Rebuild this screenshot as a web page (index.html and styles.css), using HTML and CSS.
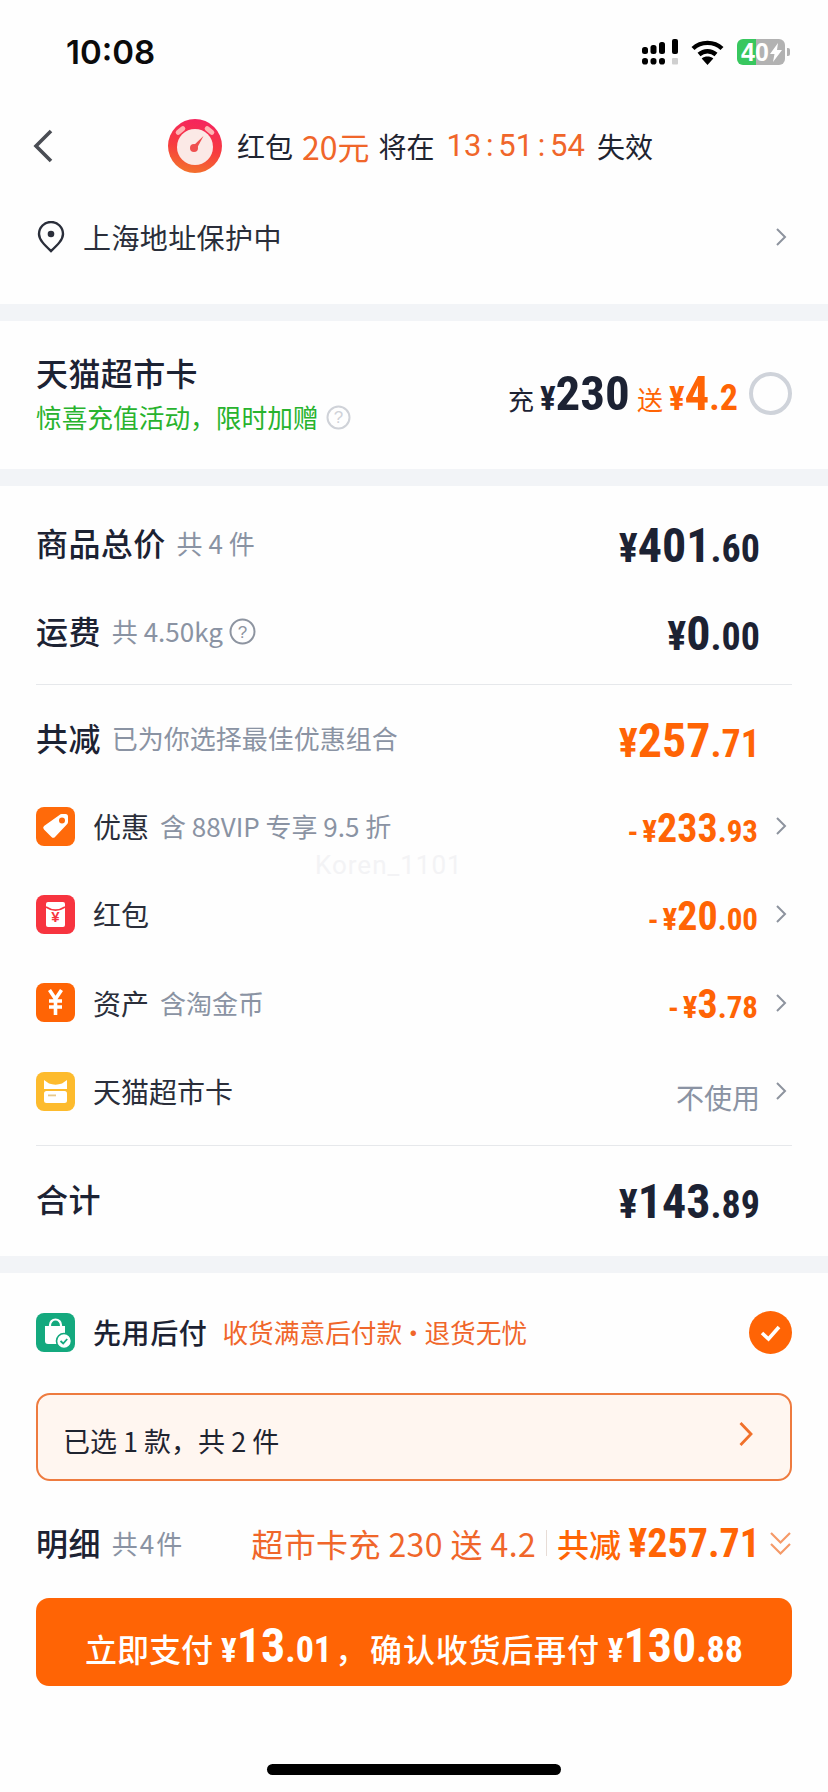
FILE: index.html
```html
<!DOCTYPE html>
<html lang="zh-CN">
<head>
<meta charset="utf-8">
<title>确认订单</title>
<link rel="stylesheet" href="styles.css">
</head>
<body>
<div class="page">
  <div class="status">
    <span class="time">10:08</span>
    <div class="status-icons">
      <svg class="signal" width="36" height="26" viewBox="0 0 36 26">
        <g fill="#000">
          <rect x="0" y="8" width="6" height="7" rx="2.500"/><rect x="8.500" y="6" width="6" height="9" rx="2.500"/><rect x="17" y="3" width="6" height="12" rx="2.500"/><rect x="30" y="0" width="6" height="15" rx="2"/>
          <rect x="0" y="19" width="6" height="6.500" rx="2.800"/><rect x="8.500" y="19" width="6" height="6.500" rx="2.800"/><rect x="17" y="19" width="6" height="6.500" rx="2.800"/>
        </g>
        <rect x="30" y="19" width="6" height="6.500" rx="1" fill="#cfcfcf"/>
      </svg>
      <svg class="wifi" width="33" height="25" viewBox="0 0 33 25">
        <path d="M2 8.500C10 1 23 1 31 8.500" fill="none" stroke="#000" stroke-width="4.400"/>
        <path d="M8 14.500c5-4.400 12-4.400 17 0" fill="none" stroke="#000" stroke-width="4.400"/>
        <path d="M16.500 25l-5.800-6.500c3.400-2.600 8.200-2.600 11.600 0z" fill="#000"/>
      </svg>
      <div class="battery"><div class="battery-body"><span class="battery-text">40</span><svg class="bolt" width="12" height="19" viewBox="0 0 12 19"><path d="M8 0L0 11h4.500L3 19l9-12H7z" fill="#fff"/></svg></div><i class="battery-tip"></i></div>
    </div>
  </div>

  <div class="nav">
    <svg class="back" width="20" height="34" viewBox="0 0 20 34"><path d="M18 2L3 17l15 15" fill="none" stroke="#4a4d54" stroke-width="3.600"/></svg>
    <div class="nav-title">
      <svg class="alarm" width="54" height="54" viewBox="0 0 54 54">
        <defs>
          <linearGradient id="alarmGrad" x1="0.6" y1="0" x2="0.4" y2="1"><stop offset="0" stop-color="#f5245f"/><stop offset="0.55" stop-color="#f73d3f"/><stop offset="1" stop-color="#f3722c"/></linearGradient>
        </defs>
        <circle cx="27" cy="27" r="27" fill="url(#alarmGrad)"/>
        <rect x="7" y="9" width="11" height="5" rx="2.500" fill="#ffb3b3" transform="rotate(-40 12.500 11.500)"/>
        <rect x="36" y="9" width="11" height="5" rx="2.500" fill="#ffb3b3" transform="rotate(40 41.500 11.500)"/>
        <circle cx="27" cy="28" r="18" fill="#fbe9e6"/>
        <path d="M24.500 27.500L35.500 17l-7 13z" fill="#ef4f4f"/>
        <circle cx="26" cy="29" r="4" fill="#ef4f4f"/>
      </svg>
      <span class="nav-text">红包</span>
      <span class="nav-orange nav-amount">20元</span>
      <span class="nav-text">将在</span>
      <span class="nav-orange nav-clock">13 : 51 : 54</span>
      <span class="nav-text">失效</span>
    </div>
  </div>

  <div class="address">
    <svg class="pin" width="28" height="32" viewBox="0 0 28 32"><path d="M14 30C7 23.500 2 18.500 2 13a12 12 0 0 1 24 0c0 5.500-5 10.500-12 17z" fill="none" stroke="#2a2e3a" stroke-width="2.400"/><circle cx="14" cy="13" r="3.300" fill="#2a2e3a"/></svg>
    <span class="address-text">上海地址保护中</span>
    <svg class="chev" width="12" height="20" viewBox="0 0 12 20"><path d="M2 2l8 8-8 8" fill="none" stroke="#8d939e" stroke-width="2"/></svg>
  </div>

  <div class="band"></div>

  <div class="card">
    <div class="card-left">
      <div class="card-title">天猫超市卡</div>
      <div class="card-sub"><span>惊喜充值活动，限时加赠</span>
        <svg class="help" width="25" height="25" viewBox="0 0 25 25"><circle cx="12.500" cy="12.500" r="11" fill="none" stroke="#cfd2d8" stroke-width="2"/><text x="12.500" y="18" class="help-q" fill="#cfd2d8">?</text></svg>
      </div>
    </div>
    <div class="card-right">
      <div class="card-amounts">
        <span class="card-word">充</span><span class="num dark"><span class="yen yen-m">¥</span><span class="int card-int">230</span></span>
        <span class="card-word orange">送</span><span class="num orange"><span class="yen yen-m">¥</span><span class="int card-int">4</span><span class="dec card-dec">.2</span></span>
      </div>
      <i class="radio"></i>
    </div>
  </div>

  <div class="band"></div>

  <div class="summary">
    <div class="row row-top">
      <span class="label">商品总价</span><span class="note">共 4 件</span>
      <span class="num dark push price"><span class="yen yen-l">¥</span><span class="int big">401</span><span class="dec big-dec">.60</span></span>
    </div>
    <div class="row row-top">
      <span class="label">运费</span><span class="note">共 4.50kg</span>
      <svg class="help" width="27" height="27" viewBox="0 0 27 27"><circle cx="13.500" cy="13.500" r="12" fill="none" stroke="#8d94a0" stroke-width="2"/><text x="13.500" y="19.500" class="help-q" fill="#8d94a0">?</text></svg>
      <span class="num dark push price"><span class="yen yen-l">¥</span><span class="int big">0</span><span class="dec big-dec">.00</span></span>
    </div>

    <div class="divider"></div>

    <div class="row row-discount">
      <span class="label">共减</span><span class="note">已为你选择最佳优惠组合</span>
      <span class="num orange push price"><span class="yen yen-l">¥</span><span class="int big">257</span><span class="dec big-dec">.71</span></span>
    </div>

    <div class="row row-item">
      <svg class="icon" width="39" height="39" viewBox="0 0 39 39"><rect width="39" height="39" rx="8" fill="#ff6a0a"/><path d="M26 7h3.500a2.500 2.500 0 0 1 2.500 2.500V15a3 3 0 0 1-1 2.200L19 30a2.500 2.500 0 0 1-3.500 0L8 22.500a2.500 2.500 0 0 1 0-3.500L23.500 8a3 3 0 0 1 2.500-1z" fill="#fff"/><circle cx="26" cy="13.500" r="3" fill="#ff6a0a"/></svg>
      <span class="item-label">优惠</span><span class="note">含 88VIP 专享 9.5 折</span>
      <span class="num orange push amount"><span class="minus">-</span><span class="yen yen-s">¥</span><span class="int mid">233</span><span class="dec mid-dec">.93</span></span>
      <svg class="chev" width="12" height="20" viewBox="0 0 12 20"><path d="M2 2l8 8-8 8" fill="none" stroke="#8d939e" stroke-width="2"/></svg>
    </div>
    <div class="row row-item">
      <svg class="icon" width="39" height="39" viewBox="0 0 39 39"><rect width="39" height="39" rx="8" fill="#f7343f"/><rect x="10" y="7" width="19" height="25" rx="2" fill="#fff"/><path d="M10 12c6 4 13 4 19 0" fill="none" stroke="#f7343f" stroke-width="1.600"/><text x="19.500" y="27" class="icon-yen" fill="#f7343f">¥</text></svg>
      <span class="item-label">红包</span>
      <span class="num orange push amount"><span class="minus">-</span><span class="yen yen-s">¥</span><span class="int mid">20</span><span class="dec mid-dec">.00</span></span>
      <svg class="chev" width="12" height="20" viewBox="0 0 12 20"><path d="M2 2l8 8-8 8" fill="none" stroke="#8d939e" stroke-width="2"/></svg>
    </div>
    <div class="row row-item">
      <svg class="icon" width="39" height="39" viewBox="0 0 39 39"><rect width="39" height="39" rx="8" fill="#ff6405"/><path d="M13.500 7l6 9 6-9M13 18h13M13 24h13M19.500 15v17" fill="none" stroke="#fff" stroke-width="3.600"/></svg>
      <span class="item-label">资产</span><span class="note">含淘金币</span>
      <span class="num orange push amount"><span class="minus">-</span><span class="yen yen-s">¥</span><span class="int mid">3</span><span class="dec mid-dec">.78</span></span>
      <svg class="chev" width="12" height="20" viewBox="0 0 12 20"><path d="M2 2l8 8-8 8" fill="none" stroke="#8d939e" stroke-width="2"/></svg>
    </div>
    <div class="row row-item">
      <svg class="icon" width="39" height="39" viewBox="0 0 39 39"><rect width="39" height="39" rx="8" fill="#fdbb2d"/><path d="M8 8l5 3.500c4 1.500 9 1.500 13 0L31 8v9H8z" fill="#fff"/><rect x="8" y="19" width="23" height="12" rx="2.500" fill="#fff"/><rect x="12" y="22.500" width="8" height="1.800" fill="#e8c98a"/></svg>
      <span class="item-label">天猫超市卡</span>
      <span class="unused push">不使用</span>
      <svg class="chev" width="12" height="20" viewBox="0 0 12 20"><path d="M2 2l8 8-8 8" fill="none" stroke="#8d939e" stroke-width="2"/></svg>
    </div>

    <div class="divider divider-low"></div>

    <div class="row row-total">
      <span class="label">合计</span>
      <span class="num dark push price"><span class="yen yen-l">¥</span><span class="int big">143</span><span class="dec big-dec">.89</span></span>
    </div>
    <div class="watermark">Koren_1101</div>
  </div>

  <div class="band"></div>

  <div class="checkout">
    <div class="pay-row">
      <svg class="icon icon-pay" width="39" height="39" viewBox="0 0 39 39"><rect width="39" height="39" rx="8" fill="#14a97e"/><path d="M9 13h20v15a3 3 0 0 1-3 3H12a3 3 0 0 1-3-3z" fill="#fff"/><path d="M14 15v-3a5.500 5.500 0 0 1 11 0v3" fill="none" stroke="#fff" stroke-width="2.200"/><circle cx="28" cy="28" r="7.500" fill="#fff" stroke="#14a97e" stroke-width="1.600"/><path d="M24.500 28l2.700 2.500 4-4.500" fill="none" stroke="#14a97e" stroke-width="1.800"/></svg>
      <span class="pay-label">先用后付</span>
      <span class="pay-note">收货满意后付款 · 退货无忧</span>
      <svg class="check" width="43" height="43" viewBox="0 0 43 43"><circle cx="21.500" cy="21.500" r="21.500" fill="#ff6405"/><path d="M13 22l6.500 6L30 16" fill="none" stroke="#fff" stroke-width="3.600"/></svg>
    </div>

    <div class="selected">
      <span class="selected-text">已选 1 款，共 2 件</span>
      <svg class="selected-chev" width="16" height="26" viewBox="0 0 16 26"><path d="M2.500 2l10.500 11L2.500 24" fill="none" stroke="#f0702a" stroke-width="2.800"/></svg>
    </div>

    <div class="detail">
      <span class="label">明细</span><span class="note detail-note">共4件</span>
      <span class="detail-info push">超市卡充 230 送 4.2</span>
      <i class="detail-sep"></i>
      <span class="detail-total">共减 <span class="detail-price">¥257.71</span></span>
      <svg class="detail-chev" width="23" height="25" viewBox="0 0 23 25"><path d="M2 2l9.500 9.500L21 2M2 13l9.500 9.500L21 13" fill="none" stroke="#f59a68" stroke-width="2.200"/></svg>
    </div>

    <div class="pay-btn">
      <span class="btn-text">立即支付</span>
      <span class="num btn-num"><span class="yen yen-m">¥</span><span class="int btn-int">13</span><span class="dec btn-dec">.01</span></span>
      <span class="btn-text btn-comma">，</span>
      <span class="btn-text btn-wide">确认收货后再付</span>
      <span class="num btn-num"><span class="yen yen-m">¥</span><span class="int btn-int">130</span><span class="dec btn-dec">.88</span></span>
    </div>

    <div class="home"></div>
  </div>
</div>
</body>
</html>
```
FILE: styles.css
```css
* { box-sizing: border-box; }
html, body { margin: 0; padding: 0; background: #fefefe; }
body { font-family: "Noto Sans CJK SC", "Noto Sans", sans-serif; color: #1c2233; }
.page { width: 828px; height: 1792px; overflow: hidden; }
svg { display: block; flex: none; }

/* status bar */
.status { height: 105px; display: flex; justify-content: space-between; padding: 39px 38px 0 66px; align-items: flex-start; }
.time { font: 600 33px/27px Inter, sans-serif; color: #0b0b0b; }
.status-icons { display: flex; align-items: center; gap: 13px; height: 26px; }
.battery { display: flex; align-items: center; gap: 2px; }
.battery-body { width: 48px; height: 26px; border-radius: 6px; background: linear-gradient(90deg, #38c75f 0 19px, #b2b2b2 19px); display: flex; align-items: center; padding-left: 4px; gap: 2px; }
.battery-text { font: 700 25px/26px "Liberation Sans", sans-serif; color: #fff; }
.bolt { margin-left: -1px; }
.battery-tip { display: block; width: 3px; height: 8px; border-radius: 0 2px 2px 0; background: #b2b2b2; }

/* nav */
.nav { height: 82px; display: flex; align-items: center; padding-left: 33px; }
.nav-title { display: flex; align-items: center; margin-left: 115px; }
.nav-text { font-size: 28px; line-height: 40px; margin-left: 15px; color: #1f2430; }
.nav-orange { color: #f0662a; margin-left: 9px; }
.nav-amount { font-size: 32px; line-height: 40px; }
.nav-clock { font: 400 31px/40px "Roboto", sans-serif; margin-left: 12px; white-space: pre; word-spacing: -3px; }
.nav-amount + .nav-text { margin-left: 9px; }
.nav-clock + .nav-text { margin-left: 12px; }

/* address */
.address { height: 117px; padding: 0 41px 17px 37px; display: flex; align-items: center; }
.address-text { font-size: 28px; margin-left: 18px; color: #2a2e3a; flex: 1; line-height: 40px; letter-spacing: 0.4px; }

.band { height: 17px; background: #f2f4f7; }

/* supermarket card */
.card { height: 148px; padding: 0 36px; display: flex; justify-content: space-between; }
.card-left { padding-top: 28px; }
.card-title { font-size: 32px; font-weight: 500; line-height: 46px; letter-spacing: 0.4px; color: #1c2233; }
.card-sub { display: flex; align-items: center; gap: 7px; margin-top: 1px; font-size: 25.700px; line-height: 42px; color: #28b32e; }
.help-q { font: 400 17px "Liberation Sans", sans-serif; text-anchor: middle; }
.card-right { display: flex; align-items: center; height: 144px; }
.card-amounts { display: flex; align-items: baseline; }
.card-word { font-size: 26px; margin-right: 6px; color: #1c2233; }
.card-word.orange { margin-left: 7px; color: #ff6405; }
.radio { display: block; width: 43px; height: 43px; border-radius: 50%; border: 4px solid #cfd3da; margin-left: 11px; }

/* numbers */
.num { display: inline-flex; align-items: baseline; font-family: "Roboto Condensed", "Roboto", sans-serif; font-weight: 700; }
.dark { color: #1c2233; }
.orange { color: #ff6405; }
.yen-l { font-size: 40px; }
.yen-m { font-size: 33px; }
.yen-s { font-size: 31px; }
.minus { font-size: 30px; margin-right: 4px; }
.big { font-size: 48px; }
.big-dec { font-size: 38px; }
.mid { font-size: 40px; }
.mid-dec { font-size: 31px; }
.card-int { font-size: 49px; }
.card-dec { font-size: 36px; }
.btn-int { font-size: 48px; }
.btn-dec { font-size: 36px; }

/* summary rows */
.summary { height: 770px; padding: 13px 36px 0; position: relative; }
.row { display: flex; align-items: center; }
.row-top { height: 88px; }
.divider { height: 1px; background: #e6e8eb; margin-top: 9px; }
.divider-low { margin-top: 10px; }
.row-discount { height: 97px; padding-top: 8px; }
.row-item { height: 88.300px; }
.row-total { height: 105px; }
.label { font-size: 32px; font-weight: 500; line-height: 44px; letter-spacing: 0.4px; color: #1c2233; margin-top: -2px; }
.note { font-size: 26px; line-height: 40px; color: #8a93a3; margin-left: 11px; }
.row .help { margin-left: 6px; }
.push { margin-left: auto; }
.price { padding-right: 32px; padding-top: 5px; }
.amount { margin-right: 17px; padding-top: 4px; }
.icon { margin-right: 18px; }
.item-label { font-size: 28px; line-height: 40px; color: #2a2e3a; }
.unused { font-size: 28px; line-height: 40px; color: #8a93a3; margin-right: 15px; padding-top: 12px; }
.row-item .chev { margin-right: 5px; }
.watermark { position: absolute; left: 315px; top: 362px; font: 400 26px/34px "Roboto", sans-serif; letter-spacing: 1px; color: #f3f3f5; }
.icon-yen { font: 700 15px "Liberation Sans", sans-serif; text-anchor: middle; }

/* checkout */
.checkout { padding: 0 36px; }
.pay-row { height: 118px; display: flex; align-items: center; }
.pay-label { font-size: 28px; font-weight: 500; line-height: 40px; letter-spacing: 0.6px; color: #1c2233; }
.pay-note { font-size: 25.700px; line-height: 40px; color: #f0662a; margin-left: 15px; flex: 1; word-spacing: -7.500px; }
.selected { height: 88px; margin-top: 2px; border: 2px solid #ee7b3f; border-radius: 14px; background: #fff6f0; display: flex; align-items: center; justify-content: space-between; padding: 0 36px 0 25px; }
.selected-text { font-size: 27px; line-height: 40px; color: #1f2430; padding-top: 8px; }
.selected-chev { margin-top: -6px; }
.detail { height: 117px; padding-top: 7px; display: flex; align-items: center; }
.detail-note { letter-spacing: 2px; }
.detail-info { font-size: 32px; line-height: 44px; letter-spacing: 0.4px; color: #f0662a; }
.detail-sep { display: block; width: 1px; height: 26px; background: #e7dcd6; margin: 0 10px; }
.detail-total { font-size: 32px; font-weight: 500; line-height: 44px; color: #ff6405; }
.detail-price { font-family: "Roboto Condensed", "Roboto", sans-serif; font-weight: 700; font-size: 40px; }
.detail-chev { margin-left: 9px; }
.pay-btn { height: 88px; border-radius: 13px; background: #ff6405; color: #fff; display: flex; align-items: baseline; justify-content: center; padding-top: 19px; }
.btn-text { font-size: 32px; font-weight: 500; line-height: 56px; }
.btn-wide { letter-spacing: 0.8px; }
.btn-num { color: #fff; margin-left: 8px; }
.btn-comma { margin-left: 3px; margin-right: 3px; }
.home { width: 294px; height: 11px; border-radius: 6px; background: #000; margin: 78px auto 0; }
```
